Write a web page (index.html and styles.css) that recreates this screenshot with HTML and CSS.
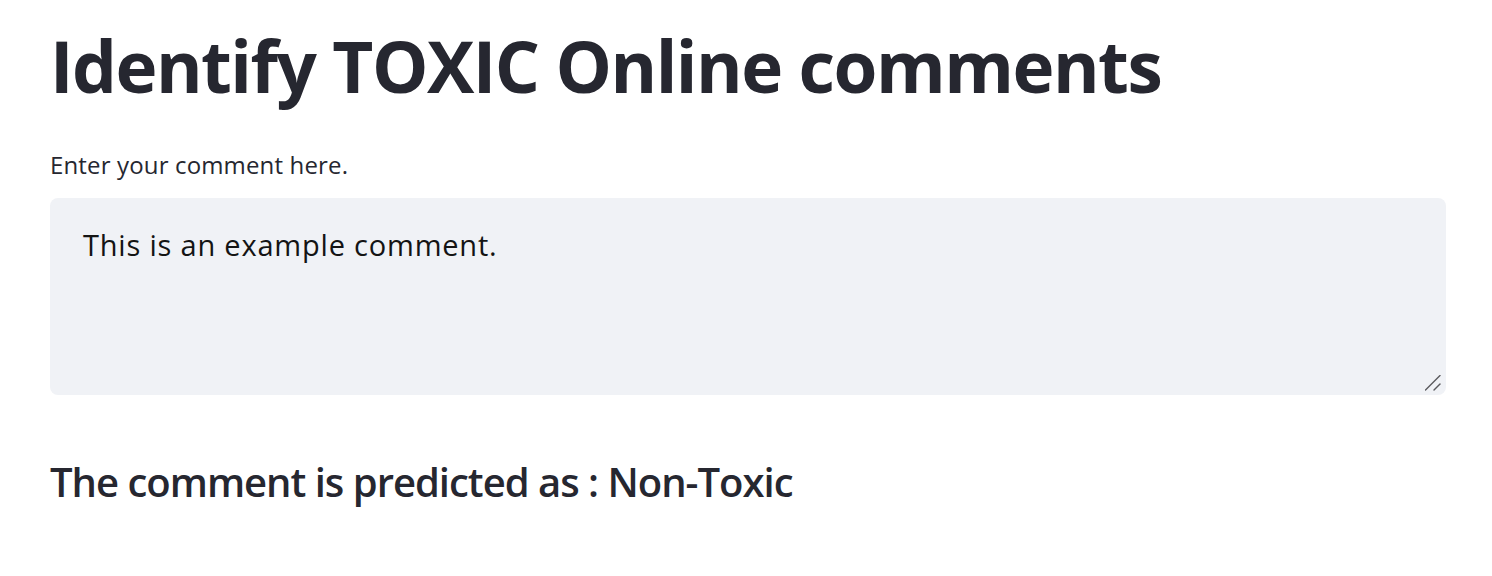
FILE: index.html
```html
<!DOCTYPE html>
<html lang="en">
<head>
<meta charset="utf-8">
<title>Identify TOXIC Online comments</title>
<link rel="stylesheet" href="styles.css">
</head>
<body>
<main class="main">
  <h1 class="title">Identify TOXIC Online comments</h1>
  <label class="field">
    <span class="field-label">Enter your comment here.</span>
    <span class="field-box">
      <textarea class="field-input">This is an example comment.</textarea>
      <svg class="grip" width="16" height="16" viewBox="0 0 16 16" aria-hidden="true">
        <line x1="0.5" y1="15" x2="15" y2="0.5" />
        <line x1="9" y1="15" x2="15" y2="9" />
      </svg>
    </span>
  </label>
  <h3 class="result">The comment is predicted as : Non-Toxic</h3>
</main>
</body>
</html>
```
FILE: styles.css
```css
html, body {
  margin: 0;
  padding: 0;
  background: #ffffff;
}
body {
  font-family: "Open Sans", "Noto Sans", sans-serif;
  color: #262730;
}
.main {
  display: flex;
  flex-direction: column;
  padding: 23px 46px 0 50px;
}
.title {
  margin: 0;
  font-size: 71px;
  font-weight: 700;
  line-height: 86px;
  letter-spacing: -1.5px;
}
.field {
  display: flex;
  flex-direction: column;
  margin-top: 40px;
}
.field-label {
  font-size: 24px;
  line-height: 32px;
  letter-spacing: 0.15px;
  color: #262730;
}
.field-box {
  position: relative;
  display: flex;
  margin-top: 17px;
}
.field-input {
  flex: 1;
  box-sizing: border-box;
  height: 197px;
  border: none;
  outline: none;
  border-radius: 8px;
  background: #f0f2f6;
  padding: 27px 33px 25px;
  font-family: inherit;
  font-size: 29px;
  line-height: 1.4;
  letter-spacing: 0.8px;
  color: #141414;
  resize: none;
}
.grip {
  position: absolute;
  right: 5px;
  bottom: 4px;
  stroke: #5a5a5e;
  stroke-width: 1.4;
  stroke-linecap: round;
}
.result {
  margin: 61px 0 0;
  font-size: 40px;
  font-weight: 600;
  line-height: 52px;
  letter-spacing: -1px;
}
```
